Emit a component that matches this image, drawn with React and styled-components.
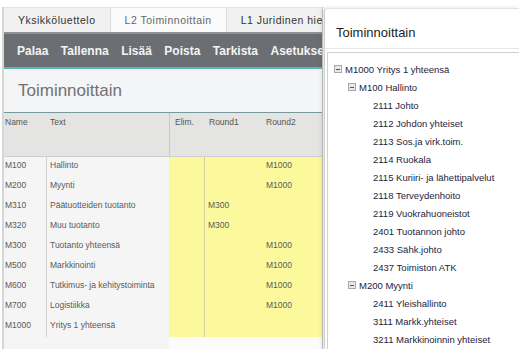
import React from 'react'
import styled, { createGlobalStyle } from 'styled-components'

const GlobalStyle = createGlobalStyle`
  html, body { margin:0; padding:0; background:#fff; }
  body { font-family:"Liberation Sans", Arial, sans-serif; }
`

const tabs = ['Yksikköluettelo', 'L2 Toiminnoittain', 'L1 Juridinen hierarkia']
const actions = ['Palaa', 'Tallenna', 'Lisää', 'Poista', 'Tarkista', 'Asetukset']

const rows = [
  { name: 'M100', text: 'Hallinto', r1: '', r2: 'M1000' },
  { name: 'M200', text: 'Myynti', r1: '', r2: 'M1000' },
  { name: 'M310', text: 'Päätuotteiden tuotanto', r1: 'M300', r2: '' },
  { name: 'M320', text: 'Muu tuotanto', r1: 'M300', r2: '' },
  { name: 'M300', text: 'Tuotanto yhteensä', r1: '', r2: 'M1000' },
  { name: 'M500', text: 'Markkinointi', r1: '', r2: 'M1000' },
  { name: 'M600', text: 'Tutkimus- ja kehitystoiminta', r1: '', r2: 'M1000' },
  { name: 'M700', text: 'Logistiikka', r1: '', r2: 'M1000' },
  { name: 'M1000', text: 'Yritys 1 yhteensä', r1: '', r2: '' },
]

const tree = [
  { level: 0, open: true, label: 'M1000 Yritys 1 yhteensä' },
  { level: 1, open: true, label: 'M100 Hallinto' },
  { level: 2, label: '2111 Johto' },
  { level: 2, label: '2112 Johdon yhteiset' },
  { level: 2, label: '2113 Sos.ja virk.toim.' },
  { level: 2, label: '2114 Ruokala' },
  { level: 2, label: '2115 Kuriiri- ja lähettipalvelut' },
  { level: 2, label: '2118 Terveydenhoito' },
  { level: 2, label: '2119 Vuokrahuoneistot' },
  { level: 2, label: '2401 Tuotannon johto' },
  { level: 2, label: '2433 Sähk.johto' },
  { level: 2, label: '2437 Toimiston ATK' },
  { level: 1, open: true, label: 'M200 Myynti' },
  { level: 2, label: '2411 Yleishallinto' },
  { level: 2, label: '3111 Markk.yhteiset' },
  { level: 2, label: '3211 Markkinoinnin yhteiset' },
]

const App = () => {
  return (
    <Screen>
      <GlobalStyle />
      <Page>
        <TabBar>
          {tabs.map((t, i) => (
            <Tab key={t} $active={i === 1}>{t}</Tab>
          ))}
        </TabBar>
        <Toolbar>
          {actions.map(a => <Action key={a}>{a}</Action>)}
        </Toolbar>
        <TitleArea>
          <h1>Toiminnoittain</h1>
        </TitleArea>
        <Grid>
          <HeadCell>Name</HeadCell>
          <HeadCell $pad={4}>Text</HeadCell>
          <HeadCell $pad={5} $split>Elim.</HeadCell>
          <HeadCell $pad={4}>Round1</HeadCell>
          <HeadCell $pad={5}>Round2</HeadCell>
          {rows.map(r => (
            <React.Fragment key={r.name}>
              <Cell>{r.name}</Cell>
              <Cell $sep>{r.text}</Cell>
              <Cell $yellow $right></Cell>
              <Cell $yellow $pad={3}>{r.r1}</Cell>
              <Cell $yellow $pad={5}>{r.r2}</Cell>
            </React.Fragment>
          ))}
          <Filler />
          <Filler $blank />
        </Grid>
      </Page>

      <Panel>
        <PanelHeader>Toiminnoittain</PanelHeader>
        <TreeBox>
          {tree.map((n, i) => (
            <TreeRow key={i} $level={n.level}>
              <Toggle $visible={n.open !== undefined}>
                {n.open !== undefined && <span />}
              </Toggle>
              {n.label}
            </TreeRow>
          ))}
        </TreeBox>
      </Panel>
    </Screen>
  )
}

export default App

const Screen = styled.div`
  width:519px;
  height:349px;
  overflow:hidden;
  display:flex;
  background:#fff;
`

const Page = styled.div`
  width:318px;
  flex:none;
  margin:7px 0 0 2px;
  border-left:2px solid #d6d6d6;
  border-right:1px solid #c8c8c8;
  display:flex;
  flex-direction:column;
  overflow:hidden;
`

const TabBar = styled.div`
  display:flex;
  height:25px;
  border-bottom:2px solid #8d9095;
  white-space:nowrap;
`

const Tab = styled.div`
  flex:none;
  padding:0 14px 0 14px;
  line-height:25px;
  font-size:10.5px;
  letter-spacing:0.5px;
  color:${p => (p.$active ? '#666' : '#333')};
  background:${p => (p.$active ? '#fbfbfb' : '#f1f1f1')};
  border-right:1px solid #dcdcdc;
  border-top:1px solid #e4e4e4;
  box-sizing:border-box;
`

const Toolbar = styled.div`
  display:flex;
  align-items:center;
  gap:12.5px;
  height:33px;
  padding-left:13px;
  background:#6b6e72;
  border-bottom:2px solid #58b9b2;
  white-space:nowrap;
`

const Action = styled.span`
  color:#f4f4f4;
  font-size:12px;
  font-weight:bold;
`

const TitleArea = styled.div`
  height:43px;
  flex:none;
  background:#f3f5f7;
  display:flex;
  align-items:center;
  padding-left:14px;
  border-bottom:1px solid #77999c;

  h1 {
    margin:0;
    font-weight:normal;
    font-size:17px;
    color:#707274;
  }
`

const Grid = styled.div`
  flex:1;
  display:grid;
  grid-template-columns:42px 123px 36px 56px 1fr;
  grid-template-rows:44px repeat(9, 20px) 1fr;
  background:#f5f5f5;
  font-size:8.5px;
  color:#555;
`

const HeadCell = styled.div`
  background:#e4e4e2;
  padding:4px 0 0 ${p => p.$pad || 1}px;
  color:#555;
  border-left:${p => (p.$split ? '1px solid #c9c9c9' : 'none')};
  border-bottom:1px solid #cfcfcf;
`

const Cell = styled.div`
  line-height:17px;
  padding-left:${p => (p.$sep ? 3 : p.$pad || 1)}px;
  white-space:nowrap;
  overflow:hidden;
  background:${p => (p.$yellow ? '#fbf99c' : '#f5f5f5')};
  border-left:${p => (p.$sep ? '1px solid #d3d3d3' : 'none')};
  border-right:${p => (p.$right ? '1px solid #d2d0a0' : 'none')};
  color:#5a5a5a;
`

const Filler = styled.div`
  grid-column:${p => (p.$blank ? '3 / 6' : '1 / 3')};
  background:${p => (p.$blank ? '#fbfbfb' : '#f5f5f5')};
`

const Panel = styled.div`
  flex:1;
  margin-top:8px;
  margin-left:1px;
  background:#fff;
  border-left:1px solid #d0d0d0;
  border-top:1px solid #e2e2e2;
  border-top-left-radius:4px;
  box-shadow:-2px 0 4px rgba(0,0,0,0.12);
  display:flex;
  flex-direction:column;
`

const PanelHeader = styled.div`
  height:39px;
  line-height:48px;
  padding-left:11px;
  font-size:13px;
  color:#1c1c1c;
  border-bottom:1px solid #e6e6e6;
`

const TreeBox = styled.div`
  flex:1;
  margin:3px 0 0 2px;
  border-left:1px solid #cfcfcf;
  border-top:1px solid #cfcfcf;
  padding:7px 0 0 6px;
`

const TreeRow = styled.div`
  display:flex;
  align-items:center;
  height:18px;
  padding-left:${p => p.$level * 14}px;
  font-size:9.5px;
  color:#24243c;
  white-space:nowrap;
`

const Toggle = styled.span`
  width:8px;
  height:8px;
  flex:none;
  margin-right:3px;
  box-sizing:border-box;
  border:${p => (p.$visible ? '1px solid #a9a9a9' : 'none')};
  background:${p => (p.$visible ? '#e8e8e8' : 'transparent')};
  display:flex;
  align-items:center;
  justify-content:center;

  span {
    width:4px;
    height:1px;
    background:#555;
  }
`
